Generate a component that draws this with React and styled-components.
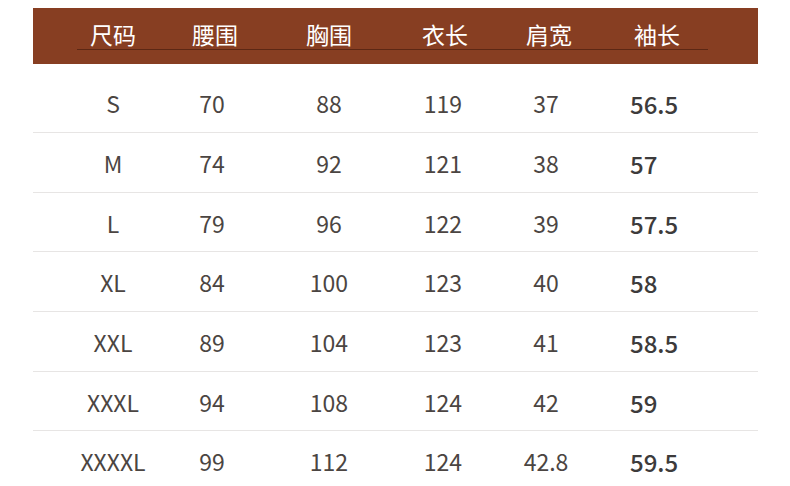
import React from 'react';
import styled, { createGlobalStyle } from 'styled-components';

const GlobalStyle = createGlobalStyle`
  html, body {
    margin: 0;
    padding: 0;
    background: #ffffff;
    overflow: hidden;
  }
  body {
    font-family: "Noto Sans CJK SC", "Noto Sans", sans-serif;
  }
`;

const Page = styled.div`
  width: 790px;
  height: 486px;
  padding: 8px 32px 0 33px;
  box-sizing: border-box;
`;

const Table = styled.div`
  width: 725px;
  display: flex;
  flex-direction: column;
`;

const HeaderBand = styled.div`
  height: 56px;
  background-color: #873e22;
`;

// shared column layout so header and body line up
const Grid = styled.div`
  display: grid;
  grid-template-columns: 30px 100px 98px 136px 92px 114px 1fr;
  align-items: center;
`;

const HeaderRow = styled(Grid)`
  height: 42px;
  align-items: end;
  background-image: linear-gradient(#5c2714, #5c2714);
  background-repeat: no-repeat;
  background-size: calc(100% - 94px) 1px;
  background-position: 44px 100%;
`;

const HeaderCell = styled.div`
  color: #ffffff;
  font-size: 23px;
  line-height: 24px;
  height: 28px;
  text-align: ${p => (p.$left ? 'left' : 'center')};
  padding-left: ${p => p.$pad || 0}px;
  white-space: nowrap;
`;

const Row = styled(Grid)`
  height: ${p => (p.$first ? '69px' : '59.7px')};
  padding-top: ${p => (p.$first ? '9px' : '0')};
  box-sizing: border-box;
  border-bottom: 1px solid #e7e5e4;
`;

const Cell = styled.div`
  font-size: ${p => (p.$strong ? '24px' : '23px')};
  line-height: 23px;
  padding-top: 2px;
  color: ${p => (p.$strong ? '#3d3b3b' : '#4b4542')};
  font-weight: ${p => (p.$strong ? 500 : 400)};
  text-align: ${p => (p.$strong ? 'left' : 'center')};
  padding-left: ${p => (p.$strong ? '27px' : '0')};
  white-space: nowrap;
`;

const Spacer = styled.div``;

const headers = ['尺码', '腰围', '胸围', '衣长', '肩宽'];
const headerPad = [0, 6, 0, 4, 6];

const rows = [
  ['S', '70', '88', '119', '37', '56.5'],
  ['M', '74', '92', '121', '38', '57'],
  ['L', '79', '96', '122', '39', '57.5'],
  ['XL', '84', '100', '123', '40', '58'],
  ['XXL', '89', '104', '123', '41', '58.5'],
  ['XXXL', '94', '108', '124', '42', '59'],
  ['XXXXL', '99', '112', '124', '42.8', '59.5'],
];

const App = () => {
  return (
    <Page>
      <GlobalStyle />
      <Table>
        <HeaderBand>
          <HeaderRow>
            <Spacer />
            {headers.map((h, i) => (
              <HeaderCell key={h} $pad={headerPad[i]}>{h}</HeaderCell>
            ))}
            <HeaderCell $left $pad={31}>袖长</HeaderCell>
          </HeaderRow>
        </HeaderBand>
        {rows.map((r, i) => (
          <Row key={r[0]} $first={i === 0}>
            <Spacer />
            {r.map((v, j) => (
              <Cell key={j} $strong={j === 5}>{v}</Cell>
            ))}
          </Row>
        ))}
      </Table>
    </Page>
  );
};

export default App;
